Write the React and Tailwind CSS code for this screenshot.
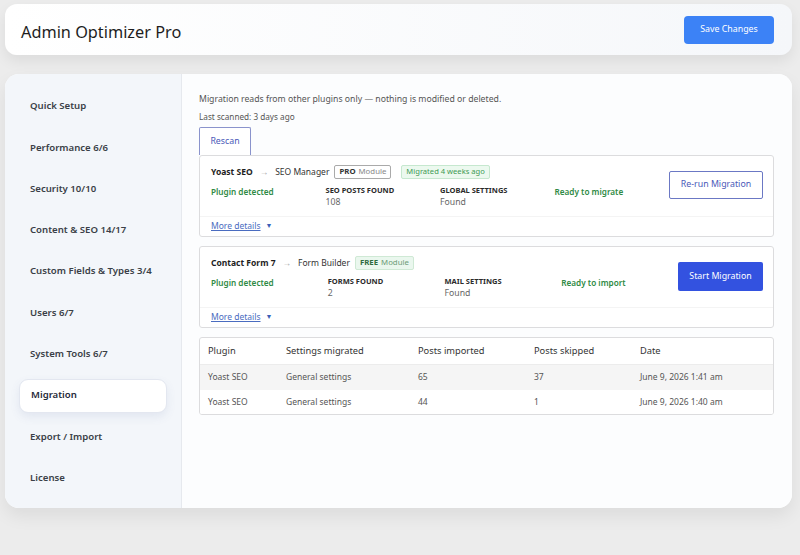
import React from 'react';

const navItems = [
  'Quick Setup',
  'Performance 6/6',
  'Security 10/10',
  'Content & SEO 14/17',
  'Custom Fields & Types 3/4',
  'Users 6/7',
  'System Tools 6/7',
  'Migration',
  'Export / Import',
  'License',
];

const history = [
  { plugin: 'Yoast SEO', settings: 'General settings', imported: '65', skipped: '37', date: 'June 9, 2026 1:41 am' },
  { plugin: 'Yoast SEO', settings: 'General settings', imported: '44', skipped: '1', date: 'June 9, 2026 1:40 am' },
];

function Stat({ label, value }) {
  return (
    <div className="flex flex-col">
      <span className="text-[7.5px] font-bold uppercase text-[#2b2b2b] leading-[11px]">{label}</span>
      <span className="text-[8.7px] text-[#666] leading-[13px]">{value}</span>
    </div>
  );
}

function MigrationCard({ source, target, tier, migrated, stats, status, action, primary }) {
  return (
    <div className="border border-[#dcdcde] rounded-[3px] bg-white">
      <div className="flex items-start pl-[11px] pr-[10px] pt-[9px] pb-[7px]">
        <div className="flex-1 flex flex-col">
          <div className="flex items-center h-[14px] text-[8.5px] whitespace-nowrap">
            <span className="font-bold text-[#1e1e1e]">{source}</span>
            <span className="text-[#aaa] mx-[7px]">→</span>
            <span className="text-[#333]">{target}</span>
            {tier === 'PRO' ? (
              <span className="ml-[5px] border border-[#aaa] rounded-[2px] px-[4px] h-[14px] flex items-center text-[7.8px]">
                <span className="font-bold text-[#333] mr-[3px]">PRO</span>
                <span className="text-[#888]">Module</span>
              </span>
            ) : (
              <span className="ml-[5px] border border-[#cfe9d5] bg-[#eaf7ee] rounded-[2px] px-[4px] h-[14px] flex items-center text-[7.8px]">
                <span className="font-bold text-[#2f6b3e] mr-[3px]">FREE</span>
                <span className="text-[#6a9a76]">Module</span>
              </span>
            )}
            {migrated && (
              <span className="ml-[10px] border border-[#c6e8cf] bg-[#ecf9ef] rounded-[2px] px-[4px] h-[14px] flex items-center text-[7.6px] text-[#3f9a55]">
                {migrated}
              </span>
            )}
          </div>
          <div className="grid grid-cols-4 mt-[6px] whitespace-nowrap">
            <span className="text-[8.2px] font-semibold text-[#2f8a45] leading-[13px]">Plugin detected</span>
            <Stat label={stats[0][0]} value={stats[0][1]} />
            <Stat label={stats[1][0]} value={stats[1][1]} />
            <span className="text-[8.2px] font-semibold text-[#2f8a45] leading-[13px]">{status}</span>
          </div>
        </div>
        {primary ? (
          <button className="mt-[6px] h-[29px] w-[85px] rounded-[2px] bg-[#3352e0] text-white text-[8.8px]">{action}</button>
        ) : (
          <button className="mt-[6px] h-[28px] w-[94px] rounded-[2px] border border-[#6b78c4] bg-white text-[#4a59b8] text-[8.8px]">{action}</button>
        )}
      </div>
      <div className="border-t border-[#f4f4f4] pl-[11px] h-[20px] flex items-center">
        <span className="text-[8.5px] text-[#4a6cc0] underline">More details</span>
        <span className="text-[7px] text-[#3b5fb8] ml-[5px]">▼</span>
      </div>
    </div>
  );
}

export default function App() {
  return (
    <div
      className="w-[800px] h-[555px] bg-[#ececec] overflow-hidden pl-[5px] pr-[8px] pt-[4px]"
      style={{ fontFamily: '"Noto Sans", "Open Sans", sans-serif' }}
    >
      <header className="h-[51px] rounded-[12px] bg-gradient-to-r from-white to-[#f5f7fa] shadow-[0_6px_14px_rgba(0,0,0,0.07)] flex items-center justify-between pl-[16px] pr-[18px]">
        <h1 className="mt-[5px] text-[16.3px] text-[#1e1e1e]">Admin Optimizer Pro</h1>
        <button className="h-[28px] w-[90px] rounded-[4px] bg-[#3c82f6] text-white text-[8.8px]">Save Changes</button>
      </header>

      <main className="mt-[19px] h-[434px] rounded-[14px] bg-white shadow-[0_8px_18px_rgba(0,0,0,0.07)] flex overflow-hidden">
        <nav className="w-[177px] shrink-0 bg-[#f3f6fa] border-r border-[#e6e9ee] pt-[15.5px] flex flex-col gap-[7.3px]">
          {navItems.map(item => (
            <div
              key={item}
              className={
                item === 'Migration'
                  ? 'mx-[14px] h-[34px] px-[11px] flex items-center whitespace-nowrap rounded-[9px] bg-white border border-[#e3e7f0] shadow-[0_4px_10px_rgba(80,100,160,0.10)] text-[9.6px] font-semibold text-[#1f2937]'
                  : 'mx-[14px] h-[34px] px-[11px] flex items-center whitespace-nowrap text-[9.6px] font-semibold text-[#3a3f47]'
              }
            >
              {item}
            </div>
          ))}
        </nav>

        <section className="flex-1 bg-[#fcfdfe] pl-[17px] pr-[18px] pt-[19px]">
          <p className="text-[8.7px] text-[#555] leading-[13px]">Migration reads from other plugins only — nothing is modified or deleted.</p>
          <p className="text-[8.2px] text-[#555] leading-[13px] mt-[4px]">Last scanned: 3 days ago</p>
          <button className="mt-[4px] block h-[28px] w-[52px] border border-[#8a93cc] border-b-0 rounded-t-[2px] bg-white text-[8.8px] text-[#4a59b8]">Rescan</button>
          <MigrationCard
            source="Yoast SEO"
            target="SEO Manager"
            tier="PRO"
            migrated="Migrated 4 weeks ago"
            stats={[['SEO posts found', '108'], ['Global settings', 'Found']]}
            status="Ready to migrate"
            action="Re-run Migration"
          />
          <div className="mt-[9px]">
            <MigrationCard
              source="Contact Form 7"
              target="Form Builder"
              tier="FREE"
              stats={[['Forms found', '2'], ['Mail settings', 'Found']]}
              status="Ready to import"
              action="Start Migration"
              primary
            />
          </div>
          <div className="mt-[9px] border border-[#dcdcde] rounded-[3px] bg-white overflow-hidden">
            <table className="w-full text-left border-collapse">
              <thead>
                <tr className="h-[26px] border-b border-[#ececec]">
                  <th className="font-normal text-[9.3px] text-[#333] pl-[8px] w-[86px]">Plugin</th>
                  <th className="font-normal text-[9.3px] text-[#333] w-[132px]">Settings migrated</th>
                  <th className="font-normal text-[9.3px] text-[#333] w-[116px]">Posts imported</th>
                  <th className="font-normal text-[9.3px] text-[#333] w-[106px]">Posts skipped</th>
                  <th className="font-normal text-[9.3px] text-[#333]">Date</th>
                </tr>
              </thead>
              <tbody>
                {history.map((row, i) => (
                  <tr key={i} className={i === 0 ? 'h-[26px] bg-[#f5f5f5]' : 'h-[24px] bg-white'}>
                    <td className="text-[8.5px] text-[#555] pl-[8px]">{row.plugin}</td>
                    <td className="text-[8.5px] text-[#555]">{row.settings}</td>
                    <td className="text-[8.5px] text-[#555]">{row.imported}</td>
                    <td className="text-[8.5px] text-[#555]">{row.skipped}</td>
                    <td className="text-[8.5px] text-[#555]">{row.date}</td>
                  </tr>
                ))}
              </tbody>
            </table>
          </div>
        </section>
      </main>
    </div>
  );
}
